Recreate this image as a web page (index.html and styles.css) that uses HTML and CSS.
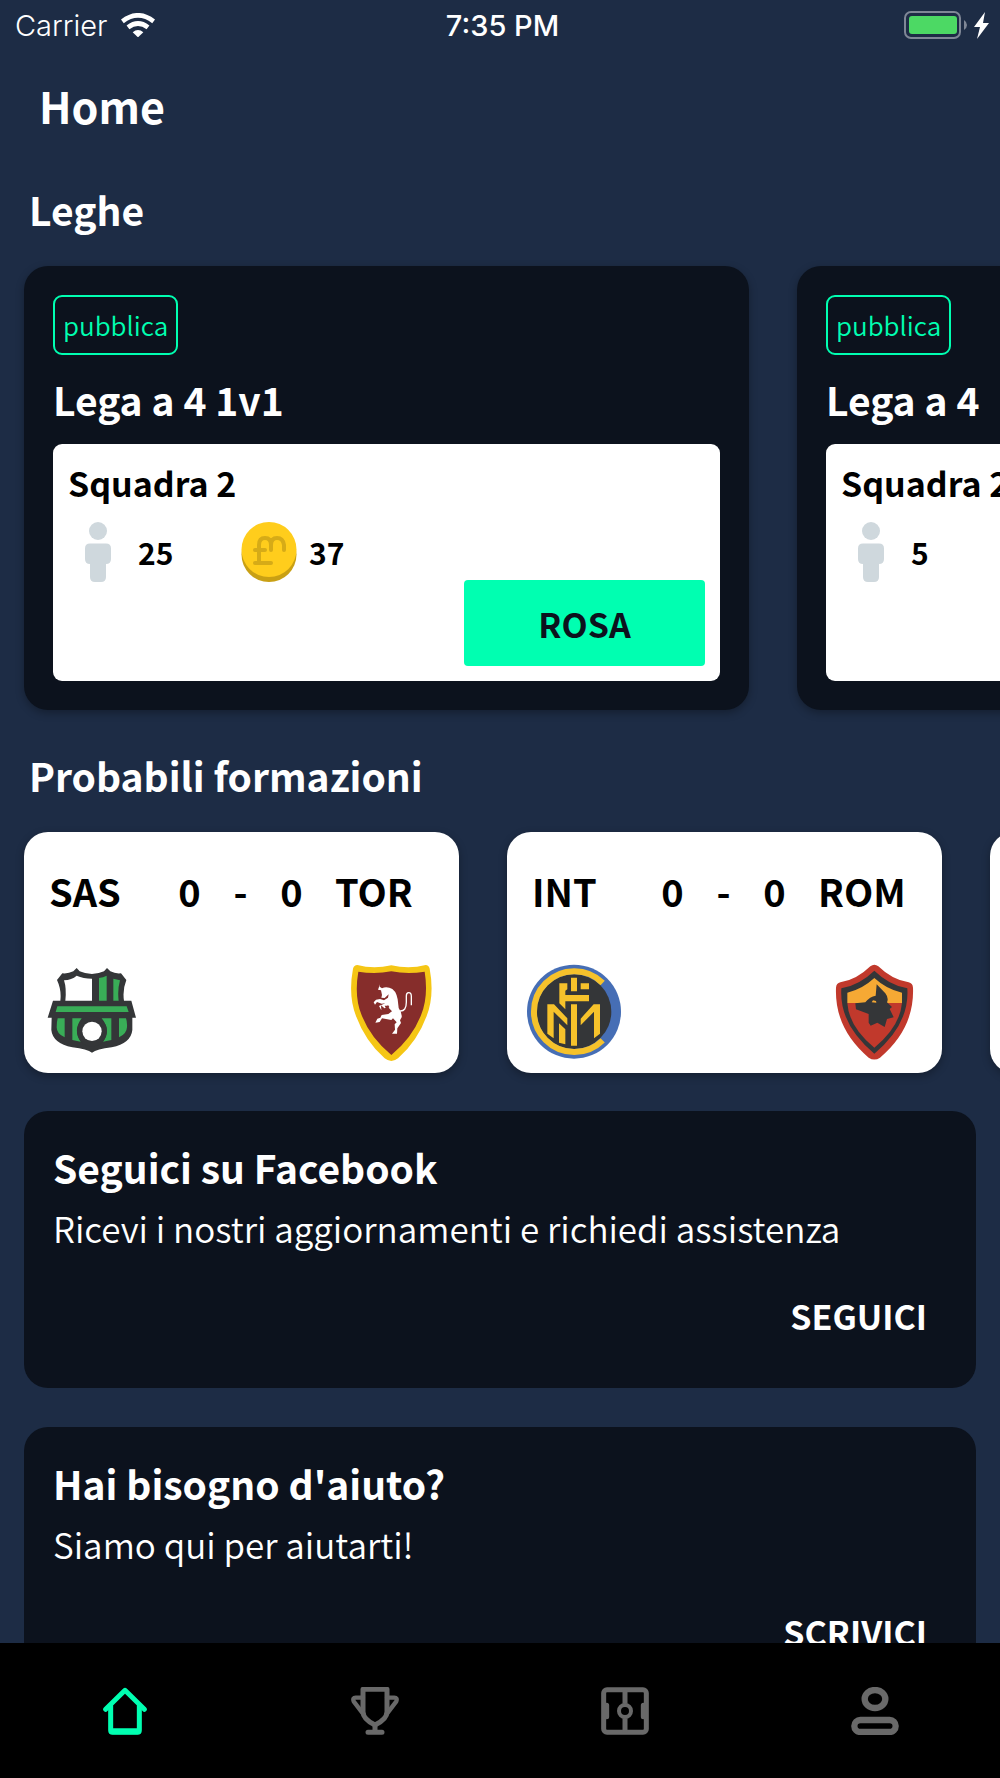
FILE: index.html
```html
<!DOCTYPE html>
<html lang="it">
<head>
    <meta charset="UTF-8">
    <meta name="viewport" content="width=device-width, initial-scale=1.0">
    <title>Home</title>
    <link rel="stylesheet" href="styles.css">
</head>
<body>
    <div class="status-bar">
        <div class="status-carrier">
            <span>Carrier</span>
            <svg width="34" height="24" viewBox="0 0 102 72" fill="none" stroke="#fff" stroke-width="14">
                <path d="M4 25Q51-11 98 25"/>
                <path d="M21 43Q51 20 81 43"/>
                <path d="M35 58Q51 44 67 58L51 73Z" fill="#fff" stroke="none"/>
            </svg>
        </div>
        <div class="status-time">7:35 PM</div>
        <div class="status-battery">
            <svg width="86" height="28" viewBox="0 0 86 28">
                <rect x="1" y="1" width="55" height="26" rx="6" fill="none" stroke="#7f8796" stroke-width="2"/>
                <rect x="5" y="5" width="48" height="18" rx="3" fill="#4cd964"/>
                <path d="M60 9q3 2 3 5t-3 5z" fill="#7f8796"/>
                <path d="M81 1L70 16h6l-3 12L85 12h-6z" fill="#fff"/>
            </svg>
        </div>
    </div>

    <header class="header">
        <h1>Home</h1>
    </header>

    <main class="content">
        <section>
            <h2 class="section-title">Leghe</h2>
            <div class="scroller">
                <article class="league-card">
                    <span class="tag">pubblica</span>
                    <h3 class="card-title">Lega a 4 1v1</h3>
                    <div class="team">
                        <h4 class="team-name">Squadra 2</h4>
                        <div class="stats">
                            <div class="stat">
                                <svg class="stat-icon" viewBox="0 0 60 60" fill="#cfd8dd">
                                    <circle cx="30" cy="9" r="9"/>
                                    <path d="M22 21.500h16q5 0 5 5V37q0 5-5 5v13q0 5-5 5h-6q-5 0-5-5V42q-5 0-5-5V26.500q0-5 5-5z"/>
                                </svg>
                                <span>25</span>
                            </div>
                            <div class="stat">
                                <svg class="stat-icon" viewBox="0 0 60 60">
                                    <circle cx="30" cy="32.500" r="27.500" fill="#c9a014"/>
                                    <circle cx="30" cy="27.500" r="27.500" fill="#ffcd1c"/>
                                    <path d="M16 41h16M16 28h10M20 40V23q0-7 6-7t6 7v5M32 23q0-7 6-7t7 7v5" fill="none" stroke="#d6ab17" stroke-width="4" stroke-linecap="round"/>
                                </svg>
                                <span>37</span>
                            </div>
                        </div>
                        <button class="team-button" type="button">ROSA</button>
                    </div>
                </article>
                <article class="league-card">
                    <span class="tag">pubblica</span>
                    <h3 class="card-title">Lega a 4</h3>
                    <div class="team">
                        <h4 class="team-name">Squadra 2</h4>
                        <div class="stats">
                            <div class="stat">
                                <svg class="stat-icon" viewBox="0 0 60 60" fill="#cfd8dd">
                                    <circle cx="30" cy="9" r="9"/>
                                    <path d="M22 21.500h16q5 0 5 5V37q0 5-5 5v13q0 5-5 5h-6q-5 0-5-5V42q-5 0-5-5V26.500q0-5 5-5z"/>
                                </svg>
                                <span>5</span>
                            </div>
                        </div>
                    </div>
                </article>
            </div>
        </section>

        <section>
            <h2 class="section-title">Probabili formazioni</h2>
            <div class="scroller">
                <article class="match-card">
                    <div class="match-score">
                        <span>SAS</span>
                        <span class="score">0</span>
                        <span class="score">-</span>
                        <span class="score">0</span>
                        <span class="away">TOR</span>
                    </div>
                    <div class="match-crests">
                        <!-- Sassuolo -->
                        <svg class="crest" viewBox="42 45 288 288">
                            <path d="M140 54L149 64Q186 80 222 64L231 54L241 64Q256 72 273 70L289 90Q277 120 282 152H304L318 203H307V240Q303 280 245 292Q200 298 186 308Q172 298 127 292Q68 280 64 240L65 203H53L69 152H91Q95 120 81 90L97 70Q114 72 130 64Z" fill="#343638"/>
                            <path d="M102 91Q125 90 140 77Q160 86 186 86V152H106Q110 115 102 91Z" fill="#fff"/>
                            <path d="M207 84Q220 82 230 77V152H207ZM250 86L270 91Q262 120 266 152H250ZM82 169H290L296 186H77ZM83 205H104V262Q80 252 80 232Q80 216 83 205ZM127 205H155Q128 240 152 275L127 270ZM215 205H244V270L219 275Q244 240 215 205ZM267 205H288Q292 216 291 232Q290 252 267 262Z" fill="#39ad57"/>
                            <circle cx="186" cy="244" r="45" fill="#343638"/>
                            <circle cx="186" cy="244" r="29" fill="#fff"/>
                        </svg>
                        <!-- Torino -->
                        <svg class="crest" viewBox="942 45 288 288">
                            <path d="M982 45Q1030 58 1084 46Q1138 58 1187 45Q1196 45 1199 56Q1214 135 1190 198Q1162 274 1104 325Q1084 341 1064 325Q1006 274 978 198Q954 135 969 56Q972 45 982 45Z" fill="#f5c615"/>
                            <path d="M985 65Q1035 74 1084 64Q1133 74 1184 65Q1196 140 1173 196Q1146 264 1084 315Q1022 264 995 196Q972 140 985 65Z" fill="#862d2b"/>
                            <path d="M1050 103L1049 110L1056 115Q1066 109 1078 113Q1098 118 1103 148L1106 174Q1117 190 1115 202L1110 211L1113 219L1102 235L1101 251H1086L1095 239L1094 223L1100 217L1089 205L1084 210L1056 205L1049 216L1036 218L1042 206L1051 203L1055 195L1075 192L1086 184L1076 173L1065 176L1053 166L1054 181L1047 168L1066 160L1055 161L1041 156L1035 164L1031 157L1038 149L1050 147L1062 151L1074 143L1076 133L1064 144L1054 143L1056 135L1053 121L1044 119Z" fill="#fff"/>
                            <path d="M1067 173L1064 167H1072L1074 165L1078 171L1073 177L1078 181L1070 179L1064 184L1066 178L1059 178Z" fill="#862d2b"/>
                            <path d="M1110 183Q1129 184 1129 157V138Q1129 128 1136 128Q1144 128 1144 139V166" fill="none" stroke="#fff" stroke-width="4"/>
                        </svg>
                    </div>
                </article>

                <article class="match-card">
                    <div class="match-score">
                        <span>INT</span>
                        <span class="score">0</span>
                        <span class="score">-</span>
                        <span class="score">0</span>
                        <span class="away">ROM</span>
                    </div>
                    <div class="match-crests">
                        <!-- Inter -->
                        <svg class="crest" viewBox="51 45 288 288">
                            <circle cx="192" cy="185" r="141" fill="#466eb5"/>
                            <circle cx="192" cy="185" r="112" fill="#343638"/>
                            <path d="M278 99A121 121 0 1 0 278 271" fill="none" stroke="#f6c22b" stroke-width="18"/>
                            <path d="M183 83H201V124H183ZM212 100H237V118H212ZM148 100H172V118L166 122V135H237V154H166V178L148 160ZM112 163H132L172 205V226L131 185V265L112 251ZM147 220L166 238V283L147 278ZM183 163H201V287H183ZM212 206L251 163H270V251L252 265V185L212 226Z" fill="#f6c22b"/>
                        </svg>
                        <!-- Roma -->
                        <svg class="crest" viewBox="951 45 288 288">
                            <path d="M1081 49Q1093 40 1105 49Q1147 90 1196 97Q1208 100 1209 113Q1214 235 1110 323Q1093 334 1076 323Q973 235 978 113Q979 100 991 97Q1039 90 1081 49Z" fill="#c1392c"/>
                            <path d="M1093 62Q1137 105 1192 115Q1199 223 1093 311Q987 223 994 115Q1049 105 1093 62Z" fill="#343638"/>
                            <path d="M1093 84Q1130 118 1176 128V159H1012V128Q1056 118 1093 84Z" fill="#f6a934"/>
                            <path d="M1012 159H1176Q1169 231 1093 293Q1017 231 1012 159Z" fill="#c1392c"/>
                            <path d="M1036 160L1066 157Q1080 139 1097 137L1100 103L1126 130Q1137 144 1131 157L1146 171L1139 177L1151 202L1131 207L1124 231L1102 218L1082 227L1076 218V192L1038 178Z" fill="#343638"/>
                            <path d="M1085 157L1089 151L1098 153L1099 158Z" fill="#f6a934"/>
                        </svg>
                    </div>
                </article>

                <article class="match-card"></article>
            </div>
        </section>

        <article class="info-card">
            <h3 class="card-title">Seguici su Facebook</h3>
            <p>Ricevi i nostri aggiornamenti e richiedi assistenza</p>
            <button class="info-action" type="button">SEGUICI</button>
        </article>

        <article class="info-card">
            <h3 class="card-title">Hai bisogno d'aiuto?</h3>
            <p>Siamo qui per aiutarti!</p>
            <button class="info-action" type="button">SCRIVICI</button>
        </article>
    </main>

    <nav class="tab-bar">
        <a class="tab active" href="#home" aria-label="Home">
            <svg viewBox="0 0 144 144" fill="none" stroke="currentColor" stroke-width="15" stroke-linecap="round" stroke-linejoin="round">
                <path d="M14 67L72 10L130 67"/>
                <path d="M29 57V130Q29 136 35 136H109Q115 136 115 130V57"/>
                <path d="M34 133H110" stroke-width="18"/>
            </svg>
        </a>
        <a class="tab" href="#leghe" aria-label="Leghe">
            <svg viewBox="0 0 144 144" fill="none" stroke="currentColor" stroke-width="15" stroke-linecap="round" stroke-linejoin="round">
                <path d="M36 7H108V74Q108 96 72 114Q36 96 36 74Z"/>
                <path d="M36 32H14Q4 32 8 43L36 80M108 32H130Q140 32 136 43L108 80" stroke-width="13"/>
                <path d="M72 116V136M51 136H93"/>
            </svg>
        </a>
        <a class="tab" href="#partite" aria-label="Partite">
            <svg viewBox="0 0 144 144" fill="none" stroke="currentColor" stroke-width="15">
                <rect x="8" y="8" width="128" height="128" rx="10"/>
                <path d="M72 8V50M72 94V136"/>
                <circle cx="72" cy="72" r="18" stroke-width="12"/>
                <path d="M17 55V89M127 55V89" stroke-linecap="round"/>
            </svg>
        </a>
        <a class="tab" href="#profilo" aria-label="Profilo">
            <svg viewBox="0 0 144 144" fill="none" stroke="currentColor" stroke-width="19">
                <ellipse cx="72" cy="36" rx="31" ry="27"/>
                <rect x="10" y="99" width="124" height="36" rx="18"/>
            </svg>
        </a>
    </nav>
</body>
</html>
```

FILE: styles.css
```css
* {
    box-sizing: border-box;
}
body {
    display: flex;
    flex-direction: column;
    height: 100vh;
    margin: 0;
    overflow: hidden;
    background: #1d2c45;
    color: #fff;
    font-family: "Noto Sans CJK SC", "Noto Sans", sans-serif;
}
h1, h2, h3, h4, p {
    margin: 0;
}
svg {
    display: block;
}
button {
    border: 0;
    font-family: inherit;
    font-weight: 700;
    cursor: pointer;
}

/* Status bar */
.status-bar {
    display: grid;
    grid-template-columns: 1fr auto 1fr;
    align-items: center;
    flex: none;
    height: 50px;
    padding: 0 10px 0 15px;
    font-family: Inter, sans-serif;
    font-size: 29px;
}
.status-carrier {
    display: flex;
    align-items: center;
    gap: 14px;
    font-weight: 300;
}
.status-time {
    font-weight: 500;
}
.status-battery {
    justify-self: end;
}

/* Header */
.header {
    flex: none;
    padding: 25px 39px 27px;
}
.header h1 {
    font-size: 43px;
    line-height: 60px;
}

/* Content */
.content {
    flex: 1;
    min-height: 0;
    overflow-y: auto;
    scrollbar-width: none;
}
.section-title {
    padding: 17px 29px 0;
    font-size: 39px;
    line-height: 60px;
}
.card-title {
    font-size: 39px;
    line-height: 60px;
}
.scroller {
    display: flex;
    gap: 48px;
    padding: 27px 24px 18px;
    overflow-x: auto;
    scrollbar-width: none;
}

/* Leagues */
.league-card {
    display: flex;
    flex-direction: column;
    flex: none;
    width: 725px;
    padding: 29px;
    border-radius: 24px;
    background: #0c121d;
    box-shadow: 0 3px 8px rgba(0, 0, 0, 0.3);
}
.tag {
    align-self: flex-start;
    padding: 0 8px;
    border: 2px solid #00ffb1;
    border-radius: 9px;
    color: #00ffb1;
    font-size: 26px;
    font-weight: 350;
    line-height: 56px;
}
.league-card .card-title {
    padding: 14px 0 15px;
}
.team {
    display: flex;
    flex-direction: column;
    flex: 1;
    padding: 9px 15px 15px;
    border-radius: 9px;
    background: #fff;
    color: #000;
}
.team-name {
    font-size: 34px;
    line-height: 60px;
}
.stats {
    display: flex;
    padding-top: 9px;
}
.stat {
    display: flex;
    align-items: center;
    gap: 10px;
    width: 171px;
    font-size: 30px;
    font-weight: 700;
    line-height: 58px;
}
.stat-icon {
    width: 60px;
    height: 60px;
}
.team-button {
    align-self: flex-end;
    width: 241px;
    height: 86px;
    margin-top: -2px;
    border-radius: 4px;
    background: #00ffb1;
    color: #0c121d;
    font-size: 34px;
}

/* Matches */
.match-card {
    flex: none;
    width: 435px;
    min-height: 241px;
    padding: 29px 19px 12px 20px;
    border-radius: 24px;
    background: #fff;
    color: #000;
    box-shadow: 0 3px 8px rgba(0, 0, 0, 0.3);
}
.match-score {
    display: grid;
    grid-template-columns: 115px 51px 51px 51px 1fr;
    padding-left: 5px;
    font-size: 38px;
    font-weight: 700;
    line-height: 60px;
}
.score {
    text-align: center;
}
.away {
    padding-left: 18px;
}
.match-crests {
    display: flex;
    justify-content: space-between;
    padding-top: 44px;
}
.crest {
    width: 96px;
    height: 96px;
    overflow: visible;
}

/* Info cards */
.info-card {
    display: flex;
    flex-direction: column;
    margin: 20px 24px 39px;
    padding: 26px 29px 30px;
    border-radius: 24px;
    background: #0c121d;
}
.info-card p {
    padding-top: 1px;
    font-size: 35px;
    font-weight: 350;
    line-height: 60px;
}
.info-action {
    align-self: flex-end;
    padding: 28px 20px 12px;
    background: none;
    color: #fff;
    font-size: 34px;
    line-height: 60px;
}

/* Tab bar */
.tab-bar {
    display: flex;
    flex: none;
    height: 135px;
    background: #000;
}
.tab {
    display: flex;
    flex: 1;
    align-items: center;
    justify-content: center;
    color: #696969;
}
.tab svg {
    width: 48px;
    height: 48px;
}
.tab.active {
    color: #00ffb1;
}
```
